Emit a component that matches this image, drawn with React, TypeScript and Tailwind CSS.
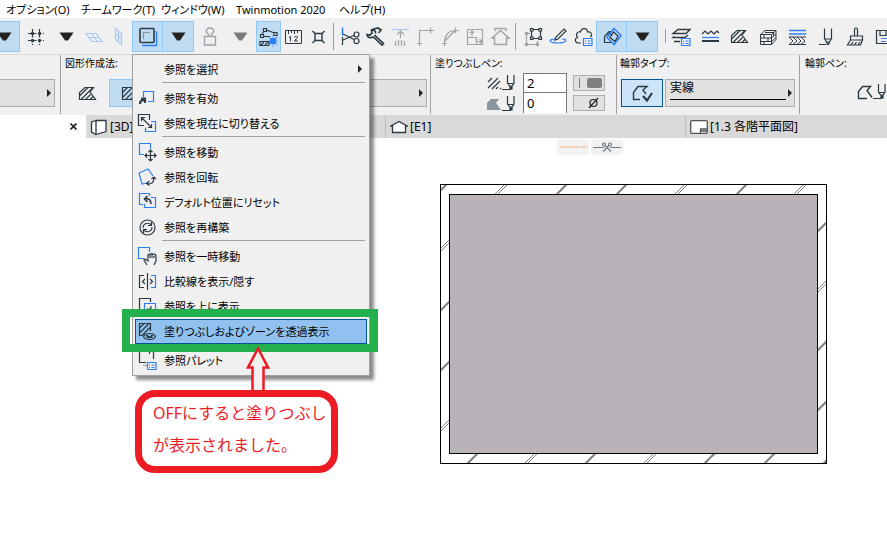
import React from 'react';

const INK = '#2b3a42';
const BLUE = '#2d7ff9';
const GRAY = '#a3a3a3';

type IconProps = { children: React.ReactNode; color?: string };

const Icon = ({ children, color = INK }: IconProps) => (
    <svg width="21" height="21" viewBox="0 0 21 21" fill="none" stroke={color} strokeWidth="1.2" className="shrink-0" aria-hidden="true">
        {children}
    </svg>
);

const DownArrow = ({ color = '#222222' }: { color?: string }) => (
    <svg width="15" height="9" viewBox="0 0 15 9" fill={color} aria-hidden="true">
        <path d="M0.5 0.5h14L9 8.5H6z" />
    </svg>
);

const RightArrow = () => (
    <svg width="4" height="8" viewBox="0 0 4 8" fill="#222222" aria-hidden="true">
        <path d="M0 0l4 4-4 4z" />
    </svg>
);

const HatchShape = () => (
    <>
        <path d="M2.5 16.5V9.5L8 4.500h8.500L13 9l5.500 7.500z" />
        <path d="M2.500 13L11 4.500M4 16.500l12-12M8.500 16.500l5-5M13 16.500l3-3" />
    </>
);

const Pen = () => (
    <svg width="13" height="19" viewBox="0 0 13 19" fill="none" stroke={INK} strokeWidth="1.2" className="shrink-0" aria-hidden="true">
        <path d="M5.500 1v8l3.500 5 3-5V1M5.500 9.500H12M0 15.500h9M8 12h2v3H8z" />
    </svg>
);

const list = <path d="M10.500 12.500h8.500v7h-8.500zM12 15h1M14.500 15h3M12 17.500h1M14.500 17.500h3" stroke={BLUE} />;

const slot25 = 'flex h-[31px] w-[25px] shrink-0 items-center justify-center';
const slot29 = 'flex h-[31px] w-[29px] shrink-0 items-center justify-center';
const active = 'flex h-[31px] shrink-0 items-center justify-center border border-[#90c8f6] bg-[#c0dcf3]';

const editTools = [
    { name: '分割', icon: <><path d="M2.500 1.500v8" stroke={BLUE} strokeWidth="1.500" /><path d="M2.500 11v8" /><path d="M3 8l12 6M3 14l12-5" /><circle cx="16.500" cy="15" r="2.500" /><circle cx="16.500" cy="8.500" r="2.500" /></> },
    { name: '調整', icon: <path d="M9.500 9l9 8.500-1.500 1.500-8.500-8C5.500 12.500 2 11.500 2 8.500l3 .5 2-2-.5-3C9 3.500 11 5 10.500 7.500M7 3.500l6-1.500 3 2-2.500 3" strokeWidth="1.700" /> },
    { name: '高さ', color: GRAY, icon: <><path d="M2 3.500h17" stroke="#a9c9ef" /><path d="M10.500 12V5M7 8.500L10.500 5 14 8.500M5.500 15v5M8.500 14v6M11.500 14v6M14.500 15v5" /></> },
    { name: '交差', color: GRAY, icon: <path d="M4.500 20V4.500H15M2 17.500h5M15.500 1.500v6M15 4.500h4" /> },
    { name: 'フィレット', color: GRAY, icon: <path d="M4.500 20v-3C4.500 10 8 4.500 15 4.500h4M2 17.500h5M15.500 1.500v6M5 15L15 4.500" /> },
    { name: 'サイズ変更', color: GRAY, icon: <path d="M2.500 3.500h15v15h-15zM2.500 11.500h9v7M7 10V5M5 7l2-2 2 2M12 15.500h5M14.500 13l2.500 2.500-2.500 2.500" /> },
    { name: '屋根', color: GRAY, icon: <path d="M2 12L10.500 4.500 19 12h-2.500v6.500h-12V12zM5 5V2.500h11V5" strokeWidth="1.500" /> },
];

const groupTools = [
    { name: 'グループ', icon: <><path d="M7 7.500H3.500v11h11V15" stroke={GRAY} /><path d="M2.500 6.500h2v2h-2zM2.500 17.500h2v2h-2zM13.500 17.500h2v2h-2z" stroke={GRAY} /><path d="M8.500 3.500h9v9h-9z" /><path d="M7.500 2.500H10V5H7.500zM16 2.500h2.500V5H16zM7.500 11H10v2.500H7.500zM16 11h2.500v2.500H16z" fill="#f0f0f0" /></> },
    { name: '編集', icon: <><path d="M8 13c-9 0-7 4 2 4s10-4 4-4" stroke={BLUE} /><path d="M7 14l1-3 8-8 2 2-8 8z" /></> },
    { name: '雲', icon: <><path d="M8 17H5.500c-4 0-4-5-1-5.500C2 8 5 5 7.500 6c1-5 7-4 7 0 4-1 5 3 3 5" />{list}</> },
];

const modelTools = [
    { name: 'レイヤー', icon: <><path d="M2 7.500l5-4h12l-4 4zM3 10.500l-1 1h7M17 9l-3 2.500h-5M3 15.500h6" strokeWidth="1.400" />{list}</> },
    { name: '線種', icon: <><path d="M2 8l3-3 3 3 3-3 3 3 3-3 2 2" /><path d="M2 11.500h17" stroke={BLUE} /><path d="M2 15h17" strokeWidth="2" /></> },
    { name: '塗りつぶし', icon: <HatchShape /> },
    { name: 'ビルディングマテリアル', icon: <path d="M2.500 8.500h11v10h-11zM2.500 8.500L7 4.500h11l-4.500 4M18 4.500v9l-4.500 5M2.500 12h11l4.500-4M2.500 15.500h11l4.500-4M6 8.500V12M10 12v3.500M6 15.500v3M15.500 7v3M7 6.500h9" strokeWidth="1" /> },
    { name: '複合構造', icon: <><path d="M2 4.500h17M2 8h17" stroke={BLUE} strokeWidth="1.500" /><path d="M2 11h17M2 18.500h17M2 11l4 4-4 3.500M6 11l4 4-4 3.500M10 11l4 4-4 3.500M14 11l4 4-4 3.500" strokeWidth="1" /></> },
    { name: 'ペン', icon: <path d="M8.500 2.500v10l3.500 6 3.500-6v-10M8.500 13h7M3 18.500h7M11 16h2v2h-2z" /> },
    { name: '表面', icon: <path d="M9.500 10V3.500c0-2 3-2 3 0V10M5.500 10h12v4h-12zM5.500 14l-3 5h13l2-5M6 19l2-3M9.500 19l2-3M13 19l2-3" /> },
    { name: 'お気に入り', icon: <><path d="M2.500 4.500h17v13h-17zM6 4.500v5h6v-5" /><path d="M7 12.500h7M7 15.500h5" stroke={BLUE} /></> },
];

const sheet = <path d="M2.500 1.500h11v11h-11z" stroke={BLUE} />;

const menuGroups = [
    [{ text: '参照を選択', more: true, icon: null }],
    [
        { text: '参照を有効', icon: <><path d="M6.500 9V3.500h10v10H11" stroke={BLUE} /><path d="M3 16c0-3 1-4 4-4M4 10.500h4V15" strokeWidth="2.200" /></> },
        { text: '参照を現在に切り替える', icon: <><path d="M14 8.500h4.500v10h-10V14.500" stroke={BLUE} /><path d="M7 12.500H1.500v-11h11V7M4.500 4.500l10 10M4.500 8V4.500H8M11 14.500h3.500V11" /></> },
    ],
    [
        { text: '参照を移動', icon: <>{sheet}<path d="M7 7h13v13H7z" fill="#f0f0f0" stroke="none" /><path d="M13.500 8v11M8 13.500h11M11.500 10l2-2 2 2M11.500 17l2 2 2-2M10 11.500l-2 2 2 2M17 11.500l2 2-2 2" /></> },
        { text: '参照を回転', icon: <><path d="M10 16l-5 1L2 6l9-4 5 7" stroke={BLUE} /><path d="M10 16.500c5 1 7-1 7-6M14.500 12l2.500-2 2 2M12.500 14l-3 2.500 3 2" /></> },
        { text: 'デフォルト位置にリセット', icon: <><path d="M6 12.500H2.500v-11h10V4M14 5.500h4.500v10h-11V12" stroke={BLUE} /><path d="M14 12c0-4-2-6-6-5M10.500 4L7.500 7l3 3" strokeWidth="1.600" /></> },
        { text: '参照を再構築', icon: <><circle cx="10.500" cy="10.500" r="7.500" /><path d="M6 11c0-5 6-6 8-3M14.500 5v3.500H11M15 10c0 5-6 6-8 3M6.500 16v-3.500H10" /></> },
    ],
    [
        { text: '参照を一時移動', icon: <><path d="M7 12.500H1.500v-11h11V6" stroke={BLUE} /><path d="M10 19l-3-5 1-1 3 2V9c0-1 2-1 2 0 0-2 2-2 2 0 0-2 2-1 2 0 0-1 2-1 2 1v5l-2 4M13 9v3M15 9v3M17 10v2" /></> },
        { text: '比較線を表示/隠す', icon: <><path d="M7 4.500H2.500v12H7M10.500 2v17M8 8l-2.500 2.500L8 13M13 8l2.500 2.500L13 13" /><path d="M14 4.500h4.500v12H14" stroke={BLUE} /></> },
        { text: '参照を上に表示', icon: <><path d="M7 13.500H2.500v-11h11V6" /><path d="M7.500 7.500h11v11h-11z" stroke={BLUE} /><path d="M10 13h4v-3" /></> },
        { text: '塗りつぶしおよびゾーンを透過表示', selected: true, icon: <><path d="M6 14.500H2.500v-12h11V10M2.500 7L7 2.500M2.500 12L12 2.500M5 14.500l8.500-8.500" /><path d="M6.500 15.500c2-4 10-4 12 0-2 4-10 4-12 0z" /><path d="M10 14c0 3 5 3 5 0" strokeWidth="2" /></> },
    ],
    [{ text: '参照パレット', icon: <><path d="M2.500 0v12.500H9M12.500 4v-2.500H16.500V9" /><path d="M6 15.500h4" stroke={GRAY} />{list}</> }],
];

const Separator = () => <span className="mx-[2px] h-[27px] w-px shrink-0 bg-[#9a9a9a]" />;

const ReferenceMenu = () => (
    <div role="menu" className="absolute top-[33px] left-0 z-10 w-[238px] border border-[#a0a0a0] bg-[#f0f0f0] p-[2px] shadow-[4px_4px_3px_rgba(0,0,0,0.45)]">
        {menuGroups.map((group, i) => (
            <div key={i}>
                {i > 0 && <div className="mr-[2px] mb-[3px] ml-[27px] h-px bg-[#a0a0a0]" />}
                {group.map((item) => (
                    <div key={item.text} className="relative">
                        <button
                            role="menuitem"
                            className={
                                'selected' in item
                                    ? 'flex h-[25px] w-[232px] items-center gap-[6px] border border-[#005499] bg-[#91c1ee] pl-px'
                                    : 'flex h-[25px] w-[232px] items-center gap-[6px] border border-transparent pl-px'
                            }
                        >
                            <Icon>{item.icon}</Icon>
                            <span className="grow pt-[2px] text-left text-[11px] leading-4 whitespace-nowrap">{item.text}</span>
                            {'more' in item && <span className="pr-1"><RightArrow /></span>}
                        </button>
                        {'selected' in item && (
                            <span className="pointer-events-none absolute -top-[10px] -left-[13px] z-10 h-[43px] w-64 border-8 border-[#22b14c]" />
                        )}
                    </div>
                ))}
            </div>
        ))}
    </div>
);

const Toolbar = () => (
    <div className="flex h-[37px] items-center border-b border-[#dcdcdc] bg-[#f0f0f0]">
        <button aria-label="ガイド線" className={`${active} w-5 border-l-0 pr-[10px]`}><span className="shrink-0"><DownArrow /></span></button>
        <button aria-label="グリッド" className="flex w-[33px] shrink-0 justify-center">
            <Icon><path d="M6.500 3v16M13.500 3v16M2 7.500h16M2 14.500h16" strokeDasharray="3.500 1.500" /><path d="M5 7.500h3M12 7.500h3M5 14.500h3M12 14.500h3" strokeWidth="2.500" /></Icon>
        </button>
        <button aria-label="グリッドの設定" className="flex w-[27px] shrink-0 justify-center"><DownArrow /></button>
        <button aria-label="作業平面" className="flex w-[27px] shrink-0 justify-center">
            <Icon color="#a9c9f5"><path d="M3 7.500h10l6 8H9zM6 11.500h10M8.500 7.500l6 8" /></Icon>
        </button>
        <button aria-label="垂直平面" className={slot25}><Icon color="#a9c9f5"><path d="M6.500 2.500l6 5v11l-6-5zM6.500 8l6 5M9.500 5v11" /></Icon></button>
        <div className="relative flex shrink-0">
            <button aria-label="参照" className={`${active} w-[31px]`}>
                <Icon><path d="M18.500 6h1v13.500H6v-1" stroke={BLUE} strokeWidth="1.400" /><rect x="3" y="2.500" width="14" height="14" rx="1" strokeWidth="1.600" /><path d="M6.500 13V6.500H13" stroke="#8b959b" /></Icon>
            </button>
            <button aria-label="参照メニュー" className={`${active} -ml-px w-8`}><DownArrow /></button>
            <ReferenceMenu />
        </div>
        <button aria-label="ロック" className="flex w-[31px] shrink-0 justify-center">
            <Icon color={GRAY}><path d="M5.500 10.500h11v8.500h-11zM9.500 10.500V8C5 5.500 8 2 11 2s6 3.500 1.500 6v2.500" strokeWidth="1.400" /></Icon>
        </button>
        <button aria-label="ロックの設定" className="flex w-[31px] shrink-0 justify-center"><DownArrow color="#7a7a7a" /></button>
        <button aria-label="スナップ" className={`${active} w-[25px]`}>
            <Icon><path d="M2.500 8.500h3v3h-3zM5.500 2.500h3v3h-3zM16 6.500h3v3h-3zM4 8l2-2.500M8.500 4l8 3M5.500 10.500H12M2 15.500h9v4H2zM3 19l3-3M7 19l3-3" /><path d="M12.500 12.500h5v5h-5z" fill={BLUE} stroke={BLUE} /><path d="M15 9.500v11M9.500 15H20M11 11l8 8M19 11l-8 8" stroke={BLUE} strokeDasharray="1 1" /></Icon>
        </button>
        <button aria-label="測定" className={slot25}>
            <Icon><path d="M2.500 4.500h16v13h-16zM5.500 5v3M8.500 5v2M11.500 5v3M14.500 5v2M6 11.500l1.500-1v5M11.500 11.500c0-1.500 3-1.500 3 0s-3 2-3 3.500H15" strokeWidth="1" /></Icon>
        </button>
        <button aria-label="要素スナップ" className={slot25}>
            <Icon><path d="M7 7.500h7v7H7zM7 7.500L4.500 5M14 7.500L16.500 5M7 14.500L4.500 17M14 14.500l2.500 2.500" strokeWidth="1.400" /></Icon>
        </button>
        <Separator />
        <span className="w-[2px] shrink-0" />
        {editTools.map((t) => <button key={t.name} aria-label={t.name} className={slot25}><Icon color={t.color}>{t.icon}</Icon></button>)}
        <Separator />
        <span className="w-[3px] shrink-0" />
        {groupTools.map((t) => <button key={t.name} aria-label={t.name} className={slot25}><Icon>{t.icon}</Icon></button>)}
        <button aria-label="トレース" className={`${active} w-[31px]`}>
            <Icon><path d="M10 16.500H3.500v-6L8 5.500h3M3.500 10.500L8 6.500l3 3" /><path d="M13 2.500l7 7-7 9-7-7z" stroke={BLUE} strokeWidth="1.500" /><path d="M12.500 6l4.500 4-3 5.500-5-4z" /></Icon>
        </button>
        <button aria-label="トレースの設定" className={`${active} -ml-px w-8`}><DownArrow /></button>
        <span className="mr-px ml-[7px] h-[14px] w-px shrink-0 bg-[#9a9a9a]" />
        {modelTools.map((t) => <button key={t.name} aria-label={t.name} className={slot29}><Icon>{t.icon}</Icon></button>)}
    </div>
);

const label = 'absolute top-[2px] left-1 text-[10px] leading-3 whitespace-nowrap';
const section = 'relative flex h-[59px] shrink-0 border-r border-[#a0a0a0] pt-6';
const picker = 'flex h-7 items-center justify-end border border-[#adadad] bg-[#e1e1e1] pr-[3px]';

const InfoBox = () => (
    <div className="flex h-[60px] bg-[#f0f0f0]">
        <div className={`${section} w-[61px]`}>
            <button aria-label="デフォルト設定" className={`${picker} w-[55px] border-l-0`}><RightArrow /></button>
        </div>
        <div className={`${section} w-[370px]`}>
            <span className={label}>図形作成法:</span>
            <button aria-label="多角形" className="flex h-7 w-12 items-center justify-center pl-1"><Icon><HatchShape /></Icon></button>
            <button aria-label="矩形" className="flex h-7 w-8 items-center border border-[#90c8f6] bg-[#c0dcf3] pl-[10px]">
                <Icon><path d="M2.500 4.500h16v12h-16zM2.500 9.500l5-5M2.500 14.500l10-10M5.500 16.500l12-12M10.500 16.500l8-8M15.500 16.500l3-3" /></Icon>
            </button>
            <button aria-label="構造" className={`${picker} mr-[3px] grow`}><RightArrow /></button>
        </div>
        <div className="relative flex h-[59px] w-[186px] shrink-0 border-r border-[#a0a0a0] pt-[18px] pl-[56px]">
            <span className={label}>塗りつぶしペン:</span>
            <div className="grid w-9 shrink-0 content-start gap-px">
                <span className="flex h-5 items-center">
                    <svg width="15" height="13" viewBox="0 0 15 13" stroke={INK} strokeWidth="1.200" aria-hidden="true"><path d="M1 5l4-4M1 11L11 1M5 12l8-8M9 12l2-2M13 12l1-1" /></svg>
                    <Pen />
                </span>
                <span className="flex h-5 items-center">
                    <svg width="15" height="13" viewBox="0 0 15 13" fill="#8b959b" aria-hidden="true"><path d="M0 12V5l4-4h8L9 5l5 7z" /></svg>
                    <Pen />
                </span>
            </div>
            <div className="w-11 shrink-0">
                <input aria-label="前景ペン" defaultValue="2" className="block h-5 w-11 border border-[#7a7a7a] bg-white pl-[3px] text-[13px] leading-4 outline-none" />
                <input aria-label="背景ペン" defaultValue="0" className="block h-5 w-11 border-x border-[#7a7a7a] bg-white pl-[3px] text-[13px] leading-4 outline-none" />
            </div>
            <div className="ml-[6px] grid content-start gap-1 pt-[2px]">
                <button aria-label="ペンカラー" className="flex h-4 w-8 items-center gap-[7px] border border-[#adadad] bg-[#e1e1e1] pl-[5px]">
                    <span className="h-[10px] w-px bg-[#7a7a7a]" />
                    <span className="h-[10px] w-[15px] rounded-xs bg-[#808080]" />
                </button>
                <button aria-label="ペンなし" className="flex h-4 w-8 items-center justify-end border border-[#adadad] bg-[#e1e1e1] pr-1">
                    <svg width="13" height="12" viewBox="0 0 13 12" fill="none" stroke="#222222" strokeWidth="1.200" aria-hidden="true"><circle cx="6.500" cy="6" r="3.500" /><path d="M2 11l9-10" /></svg>
                </button>
            </div>
        </div>
        <div className={`${section} w-[183px] gap-[2px] pl-1`}>
            <label htmlFor="outline" className="absolute top-[2px] left-[3px] text-[10px] leading-3 whitespace-nowrap">輪郭タイプ:</label>
            <button aria-label="輪郭表示" className="flex h-7 w-[42px] items-center justify-center border border-[#005499] bg-[#cce4f7]">
                <Icon><path d="M8 16.500H1.500v-7L6 3.500h9L11 7l3 4" strokeWidth="1.400" /><path d="M11 13l4 4.500 5-7.500" strokeWidth="2.200" /></Icon>
            </button>
            <div className="relative h-7 w-[130px] border border-[#adadad] bg-[#e1e1e1]">
                <select id="outline" className="block h-4 w-full appearance-none bg-transparent pl-1 text-[12px] leading-4 outline-none">
                    <option>実線</option>
                </select>
                <span className="pointer-events-none absolute right-2 bottom-[6px] left-1 h-px bg-black" />
                <span className="pointer-events-none absolute top-[9px] right-[2px]"><RightArrow /></span>
            </div>
        </div>
        <div className="relative flex h-[59px] shrink-0 items-start pt-7 pl-[57px]">
            <span className="absolute top-[2px] left-[5px] text-[10px] leading-3 whitespace-nowrap">輪郭ペン:</span>
            <svg width="16" height="19" viewBox="0 0 16 19" fill="none" stroke={INK} strokeWidth="1.400" aria-hidden="true"><path d="M10 15.500H1.500v-7l4-5h8L10 7.500l5 7" /></svg>
            <Pen />
        </div>
    </div>
);

const Tabs = () => (
    <div className="flex h-[23px] bg-[#d9d9d9] text-[12px] leading-4">
        <div className="flex w-[86px] shrink-0 items-center justify-end bg-white pr-[9px]">
            <button aria-label="閉じる">
                <svg width="7" height="7" viewBox="0 0 7 7" stroke="#222222" strokeWidth="1.600" aria-hidden="true"><path d="M0.500 0.500l6 6M6.500 0.500l-6 6" /></svg>
            </button>
        </div>
        <button className="flex w-[300px] shrink-0 items-center gap-[2px] border-r border-[#bdbdbd] pl-1">
            <svg width="18" height="18" viewBox="0 0 18 18" fill="white" stroke={INK} strokeWidth="1.300" aria-hidden="true"><path d="M6 2.500h10v11l-10 3zM6 2.500L1.500 4v10L6 16.500" /></svg>
            [3D]
        </button>
        <button className="flex w-[300px] shrink-0 items-center gap-[2px] border-r border-[#bdbdbd] pl-1">
            <svg width="18" height="14" viewBox="0 0 18 14" fill="white" stroke={INK} strokeWidth="1.300" aria-hidden="true"><path d="M2.500 12.500V6H1l8-4.500L17 6h-1.500v6.500z" /></svg>
            [E1]
        </button>
        <button className="flex shrink-0 items-center gap-[2px] pl-1">
            <svg width="18" height="14" viewBox="0 0 18 14" fill="white" stroke="#555555" strokeWidth="1.300" aria-hidden="true"><rect x="0.700" y="0.700" width="16.600" height="12.600" rx="1" /><path d="M10.500 13V9h7M10.500 11h7" /></svg>
            [1.3 各階平面図]
        </button>
    </div>
);

// diagonal wall hatch: where each line starts on the top edge
const hatches = [7, 67, 127, 187, 247, 307, 366, 425, 485, 544, 604, 663];
const doubled = [67, 247, 366, 485];

const FloorPlan = () => (
    <svg width="387" height="280" viewBox="0 0 387 280" fill="none" aria-label="平面図">
        {hatches.map((x) => (
            <g key={x} stroke="#808080">
                {doubled.includes(x) ? (
                    <path d={`M${x - 2} 0l-280 280M${x + 1} 0l-280 280`} />
                ) : (
                    <path d={`M${x} 0l-280 280`} strokeWidth="2" />
                )}
            </g>
        ))}
        <rect x="0.500" y="0.500" width="386" height="279" stroke="black" />
        <rect x="9.500" y="10.500" width="368" height="259" fill="#b9b2b9" stroke="black" />
    </svg>
);

const Annotation = () => (
    <div className="absolute top-[346px] left-[135px] z-20 w-[203px]">
        <svg width="24" height="45" viewBox="0 0 24 45" fill="none" stroke="#ed1c24" strokeWidth="2.500" className="ml-[111px]" aria-hidden="true">
            <path d="M6.500 44V21.500H2L12 2.500l10 19h-4.500V44" fill="#f0f0f0" />
        </svg>
        <p className="-mt-px rounded-[20px] border-[7px] border-[#ed1c24] bg-white pb-[5px] pl-[11px] text-[16px] leading-8 whitespace-nowrap text-[#ed1c24] [font-feature-settings:normal]">
            OFFにすると塗りつぶし<br />が表示されました。
        </p>
    </div>
);

const App: React.FC = () => {
    return (
        <div className="relative min-h-screen overflow-hidden bg-white font-['Noto_Sans','Noto_Sans_CJK_JP',sans-serif] text-black [font-feature-settings:'palt']">
            <nav className="flex h-[18px] items-center pt-[2px] pl-[6px] text-[11px] leading-4 whitespace-nowrap">
                <button className="w-[75px] text-left">オプション(O)</button>
                <button className="w-20 text-left">チームワーク(T)</button>
                <button className="w-[75px] text-left">ウィンドウ(W)</button>
                <button className="w-[103px] text-left">Twinmotion 2020</button>
                <button className="text-left">ヘルプ(H)</button>
            </nav>
            <Toolbar />
            <InfoBox />
            <Tabs />
            <main className="pt-px pl-[440px]">
                <div className="flex gap-[2px] pl-[117px]">
                    <button aria-label="破線" className="flex h-4 w-8 items-center justify-center rounded-sm bg-[#f2f2f2]">
                        <svg width="27" height="2" viewBox="0 0 27 2" stroke="#f7a860" strokeDasharray="6 1" aria-hidden="true"><path d="M0 1h27" /></svg>
                    </button>
                    <button aria-label="切断" className="flex h-4 w-8 items-center justify-center rounded-sm bg-[#f2f2f2]">
                        <svg width="28" height="10" viewBox="0 0 28 10" fill="none" stroke="#6f7a80" strokeWidth="1.200" aria-hidden="true"><path d="M0 5.500h11M17 5.500h11M10 9.500l6-6M18 9.500l-6-6" /><circle cx="11" cy="2.500" r="1.500" /><circle cx="17" cy="2.500" r="1.500" /></svg>
                    </button>
                </div>
                <div className="pt-[29px]"><FloorPlan /></div>
            </main>
            <Annotation />
        </div>
    );
};

export default App;
